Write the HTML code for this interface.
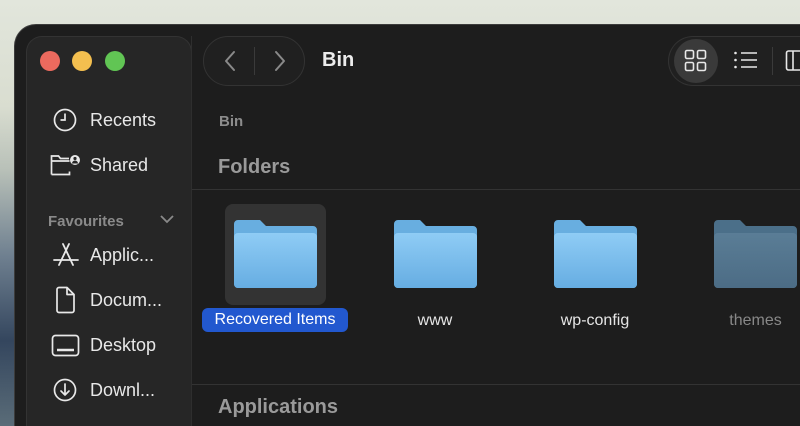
<!DOCTYPE html>
<html style="width:800px;height:426px;overflow:hidden"><head><meta charset="utf-8"><style>
*{margin:0;padding:0;box-sizing:border-box}
body{width:800px;height:426px;overflow:hidden;position:relative;font-family:"Liberation Sans",sans-serif;
background:linear-gradient(180deg,#e2e6dc 0%,#d9ddd0 25%,#b8c0b8 40%,#6f8090 60%,#34465e 80%,#5a6c78 100%)}
.win{position:absolute;left:14px;top:24px;width:786px;height:402px;background:#1d1d1d;border-radius:22px 0 0 0;border-left:1px solid #3c3c3c;border-top:1px solid #3c3c3c}
.side{position:absolute;left:26px;top:36px;width:166px;height:390px;background:#262626;border-radius:16px 16px 0 0;border:1px solid #333;border-bottom:none}
.t{position:absolute;white-space:nowrap}
.dot{position:absolute;width:20px;height:20px;border-radius:50%;top:51px}
.si{position:absolute;left:90px;color:#e8e8e8;font-size:18px}
.ic{position:absolute}
.pill{position:absolute;border:1px solid #333;background:#202020;border-radius:25px}
.line{position:absolute;left:191px;right:0;height:1px;background:#333}
.fl{position:absolute;top:220px;width:83px;height:68px}
.lab{position:absolute;top:312px;font-size:16px;color:#e6e6e6;text-align:center;width:120px}
</style></head><body>
<div class="win"></div>
<div class="side"></div>
<div class="dot" style="left:40px;background:#ec6a5e"></div>
<div class="dot" style="left:72px;background:#f4bf4f"></div>
<div class="dot" style="left:105px;background:#61c554"></div>

<div class="pill" style="left:203px;top:36px;width:102px;height:50px"></div>
<div style="position:absolute;left:254px;top:47px;width:1px;height:28px;background:#3a3a3a"></div>
<svg class="ic" style="left:220px;top:49px" width="20" height="24"><path d="M14 3L6 12l8 9" fill="none" stroke="#8a8a8a" stroke-width="2" stroke-linecap="round" stroke-linejoin="round"/></svg>
<svg class="ic" style="left:270px;top:49px" width="20" height="24"><path d="M6 3l8 9-8 9" fill="none" stroke="#8a8a8a" stroke-width="2" stroke-linecap="round" stroke-linejoin="round"/></svg>
<div class="t" style="left:322px;top:49px;font-size:20px;font-weight:bold;color:#ececec">Bin</div>

<div class="pill" style="left:668px;top:36px;width:132px;height:50px;border-radius:25px 0 0 25px;border-right:none"></div>
<div style="position:absolute;left:674px;top:39px;width:44px;height:44px;border-radius:50%;background:#3a3a3a"></div>
<svg class="ic" style="left:684px;top:49px" width="24" height="24" fill="none" stroke="#e8e8e8" stroke-width="1.6"><rect x="1.5" y="1.5" width="8" height="8" rx="1.5"/><rect x="13.5" y="1.5" width="8" height="8" rx="1.5"/><rect x="1.5" y="13.5" width="8" height="8" rx="1.5"/><rect x="13.5" y="13.5" width="8" height="8" rx="1.5"/></svg>
<svg class="ic" style="left:733px;top:50px" width="26" height="20" fill="#e8e8e8" stroke="#e8e8e8" stroke-width="1.6"><circle cx="2.5" cy="3" r="1.3" stroke="none"/><circle cx="2.5" cy="10" r="1.3" stroke="none"/><circle cx="2.5" cy="17" r="1.3" stroke="none"/><path d="M8 3h16M8 10h16M8 17h16"/></svg>
<div style="position:absolute;left:772px;top:47px;width:1px;height:28px;background:#3a3a3a"></div>
<svg class="ic" style="left:785px;top:49px" width="15" height="24" fill="none" stroke="#e8e8e8" stroke-width="1.6"><rect x="1.5" y="2" width="20" height="19" rx="2"/><path d="M8 2v19"/></svg>

<div class="t" style="left:219px;top:113px;font-size:15px;font-weight:bold;color:#8c8c8c">Bin</div>
<div class="t" style="left:218px;top:156px;font-size:20px;font-weight:bold;color:#9a9a9a">Folders</div>
<div class="line" style="top:189px"></div>
<div class="line" style="top:384px"></div>
<div class="t" style="left:218px;top:396px;font-size:20px;font-weight:bold;color:#9a9a9a">Applications</div>

<svg class="ic" style="left:53px;top:108px" width="24" height="24" fill="none" stroke="#e8e8e8" stroke-width="1.7"><circle cx="12" cy="12" r="10.5"/><path d="M12 5.5V12H7.5"/></svg>
<div class="si" style="top:110px">Recents</div>
<svg class="ic" style="left:50px;top:153px" width="30" height="24" fill="none" stroke="#e8e8e8" stroke-width="1.7"><path d="M1.5 21.5V3h7l2 2.5H19M1.5 8h18M1.5 21.5h18v-3"/><circle cx="25" cy="7" r="5" fill="#e8e8e8" stroke="none"/><circle cx="25" cy="5.5" r="1.6" fill="#262626" stroke="none"/><path d="M22 10.5a3 3 0 0 1 6 0" fill="#262626" stroke="none"/></svg>
<div class="si" style="top:155px">Shared</div>
<div class="t" style="left:48px;top:213px;font-size:15px;font-weight:bold;color:#8a8a8a">Favourites</div>
<svg class="ic" style="left:159px;top:213px" width="16" height="12"><path d="M2 3l6 6 6-6" fill="none" stroke="#8a8a8a" stroke-width="1.8"/></svg>
<svg class="ic" style="left:52px;top:242px" width="28" height="26" fill="none" stroke="#e8e8e8" stroke-width="1.8" stroke-linecap="round"><path d="M11 2l10 21M17 2L7 23M2 18h24"/></svg>
<div class="si" style="top:245px">Applic...</div>
<svg class="ic" style="left:55px;top:286px" width="22" height="28" fill="none" stroke="#e8e8e8" stroke-width="1.7" stroke-linejoin="round"><path d="M2 3.5a2 2 0 0 1 2-2h8l7 7v16a2 2 0 0 1-2 2H4a2 2 0 0 1-2-2z M12 1.5v7h7"/></svg>
<div class="si" style="top:290px">Docum...</div>
<svg class="ic" style="left:51px;top:334px" width="30" height="24" fill="none" stroke="#e8e8e8" stroke-width="1.7"><rect x="1.5" y="1.5" width="26" height="20" rx="3"/><path d="M6 16h17" stroke-width="2.5"/></svg>
<div class="si" style="top:335px">Desktop</div>
<svg class="ic" style="left:53px;top:378px" width="24" height="24" fill="none" stroke="#e8e8e8" stroke-width="1.7" stroke-linecap="round" stroke-linejoin="round"><circle cx="12" cy="12" r="10.5"/><path d="M12 6v11M8 13l4 4 4-4"/></svg>
<div class="si" style="top:380px">Downl...</div>
<div style="position:absolute;left:191px;top:36px;width:1px;height:390px;background:#2e2e2e"></div>

<div style="position:absolute;left:225px;top:204px;width:101px;height:101px;background:#333;border-radius:8px"></div>
<svg width="0" height="0" style="position:absolute"><defs>
<linearGradient id="g" x1="0" y1="0" x2="0" y2="1"><stop offset="0" stop-color="#8fccf5"/><stop offset="1" stop-color="#66ade2"/></linearGradient>
<linearGradient id="g2" x1="0" y1="0" x2="0" y2="1"><stop offset="0" stop-color="#5a7d96"/><stop offset="1" stop-color="#4c6c85"/></linearGradient>
</defs></svg>
<svg class="fl" style="left:234px"><path d="M0 4a4 4 0 0 1 4-4h22l6 6h47a4 4 0 0 1 4 4v54a4 4 0 0 1-4 4H4a4 4 0 0 1-4-4z" fill="#68aee0"/><rect x="0" y="13" width="83" height="55" rx="4" fill="url(#g)"/></svg>
<svg class="fl" style="left:394px"><path d="M0 4a4 4 0 0 1 4-4h22l6 6h47a4 4 0 0 1 4 4v54a4 4 0 0 1-4 4H4a4 4 0 0 1-4-4z" fill="#68aee0"/><rect x="0" y="13" width="83" height="55" rx="4" fill="url(#g)"/></svg>
<svg class="fl" style="left:554px"><path d="M0 4a4 4 0 0 1 4-4h22l6 6h47a4 4 0 0 1 4 4v54a4 4 0 0 1-4 4H4a4 4 0 0 1-4-4z" fill="#68aee0"/><rect x="0" y="13" width="83" height="55" rx="4" fill="url(#g)"/></svg>
<svg class="fl" style="left:714px;width:86px"><path d="M0 4a4 4 0 0 1 4-4h22l6 6h47a4 4 0 0 1 4 4v54a4 4 0 0 1-4 4H4a4 4 0 0 1-4-4z" fill="#4b6f89"/><rect x="0" y="13" width="83" height="55" rx="4" fill="url(#g2)"/></svg>

<div style="position:absolute;left:202px;top:308px;width:146px;height:24px;background:#2258cf;border-radius:6px"></div>
<div class="t" style="left:202px;top:311px;width:146px;text-align:center;font-size:16px;color:#fff">Recovered Items</div>
<div class="lab" style="left:375px">www</div>
<div class="lab" style="left:535px">wp-config</div>
<div class="t" style="left:714px;top:312px;width:83px;text-align:center;font-size:16px;color:#888">themes</div>
</body></html>
